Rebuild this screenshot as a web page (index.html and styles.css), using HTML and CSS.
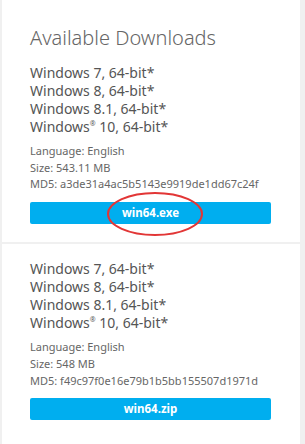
FILE: index.html
```html
<!DOCTYPE html>
<html lang="en">
<head>
    <meta charset="UTF-8">
    <meta name="viewport" content="width=device-width, initial-scale=1.0">
    <title>Available Downloads</title>
    <link rel="stylesheet" href="styles.css">
</head>
<body>
    <div class="panel">
        <div class="download first">
            <h2>Available Downloads</h2>
            <ul class="os-list">
                <li>Windows 7, 64-bit*</li>
                <li>Windows 8, 64-bit*</li>
                <li>Windows 8.1, 64-bit*</li>
                <li>Windows<sup>®</sup> 10, 64-bit*</li>
            </ul>
            <div class="details">
                <p>Language: English</p>
                <p>Size: 543.11 MB</p>
                <p>MD5: a3de31a4ac5b5143e9919de1dd67c24f</p>
            </div>
            <div class="btn-wrap">
                <a class="dl-btn" href="#">win64.exe</a>
                <!-- red marker drawn over the button -->
                <svg class="marker" width="100" height="46" viewBox="0 0 100 46">
                    <ellipse cx="50" cy="23" rx="47" ry="21" fill="none" stroke="#e23636" stroke-width="2"/>
                </svg>
            </div>
        </div>

        <div class="download">
            <ul class="os-list">
                <li>Windows 7, 64-bit*</li>
                <li>Windows 8, 64-bit*</li>
                <li>Windows 8.1, 64-bit*</li>
                <li>Windows<sup>®</sup> 10, 64-bit*</li>
            </ul>
            <div class="details">
                <p>Language: English</p>
                <p>Size: 548 MB</p>
                <p>MD5: f49c97f0e16e79b1b5bb155507d1971d</p>
            </div>
            <div class="btn-wrap">
                <a class="dl-btn" href="#">win64.zip</a>
            </div>
        </div>
    </div>
</body>
</html>
```

FILE: styles.css
```css
body {
    margin: 0;
    background-color: #f0f0f0;
    font-family: "Noto Sans", "Open Sans", sans-serif;
    color: #555;
}
.panel {
    background-color: #fff;
    margin: 0 5px 0 2px;
    height: 444px;
}
.download {
    padding: 20px 29px 18px 28px;
}
.download.first {
    padding-top: 24px;
}
.download + .download {
    border-top: 2px solid #f0f0f0;
    padding-top: 16px;
}
h2 {
    font-size: 20px;
    font-weight: 300;
    color: #666;
    margin: 0 0 12px 0;
    line-height: 28px;
}
.os-list {
    list-style: none;
    margin: 0;
    padding: 0;
    font-size: 14px;
    line-height: 18px;
}
.os-list sup {
    font-size: 7px;
    vertical-align: top;
    line-height: 12px;
}
.details {
    margin-top: 7px;
    font-size: 11px;
    line-height: 16.7px;
    color: #666;
}
.details p {
    margin: 0;
}
.btn-wrap {
    position: relative;
    margin-top: 9px;
}
.dl-btn {
    display: block;
    background-color: #00aeef;
    color: #fff;
    text-align: center;
    text-decoration: none;
    font-weight: 700;
    font-size: 11.5px;
    line-height: 22px;
    border-radius: 2px;
}
.marker {
    position: absolute;
    left: 75px;
    top: -11px;
}
```
